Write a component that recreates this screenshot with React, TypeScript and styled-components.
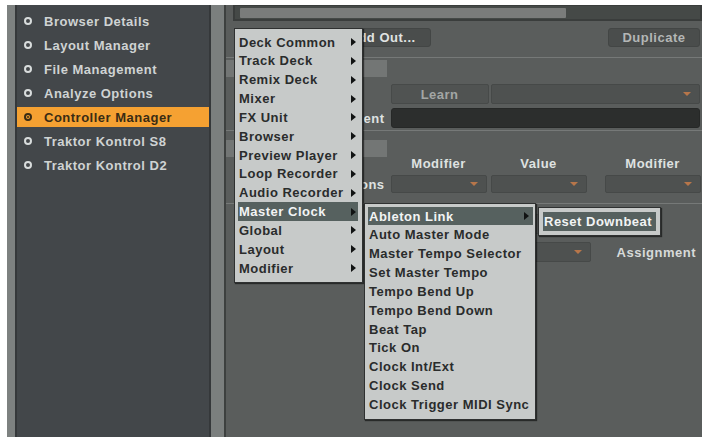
import React from "react";
import styled, { createGlobalStyle } from "styled-components";

const Global = createGlobalStyle`
  html, body { margin: 0; padding: 0; background: #ffffff; }
  body { font-family: "Liberation Sans", Arial, sans-serif; }
  * { box-sizing: border-box; }
`;

const Frame = styled.div`
  position: relative;
  width: 704px;
  height: 440px;
  padding: 5px 2px 3px 7px;
  display: flex;
  overflow: hidden;
  background: #ffffff;
`;

/* ---------- sidebar ---------- */
const Sidebar = styled.nav`
  width: 205px;
  display: flex;
  background: #7d8180;
  padding-left: 8px;
`;

const SidePanel = styled.ul`
  flex: 1;
  margin: 0;
  list-style: none;
  background: #43474a;
  border-left: 2px solid #35383a;
  border-right: 2px solid #35383a;
  padding: 6px 0 0;
  display: flex;
  flex-direction: column;
  gap: 4px;
`;

const SideItem = styled.li<{ $active?: boolean }>`
  height: 20px;
  display: flex;
  align-items: center;
  gap: 12px;
  padding-left: 7px;
  font: bold 13px/1 "Liberation Sans", Arial, sans-serif;
  letter-spacing: 0.5px;
  white-space: nowrap;
  color: ${(p) => (p.$active ? "#3a2c14" : "#cfd3d3")};
  background: ${(p) => (p.$active ? "#f5a132" : "transparent")};
`;

const Bullet = styled.span<{ $active?: boolean }>`
  width: 8px;
  height: 8px;
  flex-shrink: 0;
  border-radius: 50%;
  border: 2px solid ${(p) => (p.$active ? "#3a2c14" : "#d8dcdc")};
  display: flex;
  align-items: center;
  justify-content: center;
  &::after {
    content: "";
    width: 2px;
    height: 2px;
    border-radius: 50%;
    background: ${(p) => (p.$active ? "#3a2c14" : "transparent")};
  }
`;

const Gutter = styled.div`
  width: 15px;
  background: #7b7f7e;
  border-right: 2px solid #3d403f;
`;

/* ---------- main area ---------- */
const Main = styled.main`
  flex: 1;
  background: #5a5d5c;
  display: flex;
  flex-direction: column;
`;

const TopStrip = styled.div`
  height: 16px;
  margin-left: 7px;
  display: flex;
  align-items: center;
  background: #454947;
  border: 2px solid #3a3d3c;
  border-top-width: 1px;
`;

const ScrollFill = styled.div`
  width: 326px;
  height: 10px;
  margin-left: 5px;
  background: #7a7c7b;
  border-radius: 1px;
`;

const ButtonRow = styled.div`
  height: 36px;
  display: flex;
  align-items: flex-start;
  padding: 7px 2px 0 13px;
  gap: 5px;
`;

const Button = styled.div<{ $w: number; $color?: string; $push?: boolean }>`
  width: ${(p) => p.$w}px;
  height: 19px;
  margin-left: ${(p) => (p.$push ? "auto" : "0")};
  display: flex;
  align-items: center;
  justify-content: center;
  background: #4a4d4c;
  border: 1px solid #434645;
  border-radius: 3px;
  font: bold 13px/1 "Liberation Sans", Arial, sans-serif;
  letter-spacing: 0.5px;
  color: ${(p) => p.$color ?? "#e0e3e2"};
`;

const Rule = styled.div<{ $mt?: number }>`
  height: 1px;
  margin-top: ${(p) => p.$mt ?? 0}px;
  background: #767978;
`;

const SectionHead = styled.div<{ $mt?: number }>`
  width: 161px;
  height: 17px;
  flex-shrink: 0;
  margin-top: ${(p) => p.$mt ?? 0}px;
  background: #737675;
`;

const FieldRow = styled.div<{ $mt: number; $h: number }>`
  margin-top: ${(p) => p.$mt}px;
  height: ${(p) => p.$h}px;
  display: flex;
  align-items: stretch;
`;

const Label = styled.div`
  width: 159px;
  margin-right: 6px;
  flex-shrink: 0;
  display: flex;
  align-items: center;
  justify-content: flex-end;
  font: bold 13px/1 "Liberation Sans", Arial, sans-serif;
  letter-spacing: 0.5px;
  color: #dfe2e1;
  white-space: nowrap;
`;

const SideLabel = styled(Label)`
  width: auto;
  margin-left: 26px;
  justify-content: flex-start;
  color: #d7dad9;
`;

const Dropdown = styled.div<{ $w?: number; $ml?: number }>`
  ${(p) => (p.$w ? `width: ${p.$w}px; flex-shrink: 0;` : "flex: 1;")}
  margin-left: ${(p) => p.$ml ?? 0}px;
  margin-right: ${(p) => (p.$w ? 0 : 2)}px;
  display: flex;
  align-items: center;
  justify-content: flex-end;
  padding-right: 8px;
  background: #4e5150;
  border: 1px solid #464948;
  border-radius: 2px;
`;

const DropArrow = styled.span`
  width: 0;
  height: 0;
  border-left: 4px solid transparent;
  border-right: 4px solid transparent;
  border-top: 4px solid #b7764a;
`;

const LearnButton = styled.div`
  width: 98px;
  flex-shrink: 0;
  display: flex;
  align-items: center;
  justify-content: center;
  background: #505352;
  border: 1px solid #474a49;
  border-radius: 2px;
  font: bold 13px/1 "Liberation Sans", Arial, sans-serif;
  letter-spacing: 0.5px;
  color: #a3a6a5;
`;

const TextField = styled.div`
  flex: 1;
  margin-right: 2px;
  background: #2c2e2d;
  border: 1px solid #262827;
  border-radius: 3px;
`;

const HeadRow = styled.div<{ $mt: number }>`
  margin-top: ${(p) => p.$mt}px;
  height: 32px;
  display: flex;
`;

const ColHead = styled.div<{ $w: number; $ml: number }>`
  width: ${(p) => p.$w}px;
  margin-left: ${(p) => p.$ml}px;
  flex-shrink: 0;
  padding-top: 16px;
  text-align: center;
  font: bold 13px/15px "Liberation Sans", Arial, sans-serif;
  letter-spacing: 0.5px;
  color: #dfe2e1;
`;

/* ---------- popup menus ---------- */
const Menu = styled.ul<{
  $x: number;
  $y: number;
  $w: number;
  $h: number;
  $pt: number;
  $pl: number;
  $pr: number;
}>`
  position: absolute;
  left: ${(p) => p.$x}px;
  top: ${(p) => p.$y}px;
  width: ${(p) => p.$w}px;
  height: ${(p) => p.$h}px;
  margin: 0;
  list-style: none;
  padding: ${(p) => p.$pt}px ${(p) => p.$pr}px 0 ${(p) => p.$pl}px;
  background: #c7cac9;
  border: 1px solid #2f3131;
  box-shadow: 1px 1px 1px rgba(0, 0, 0, 0.55);
`;

const MenuItem = styled.li<{ $active?: boolean; $pr: number; $h?: number }>`
  height: ${(p) => p.$h ?? 18.85}px;
  display: flex;
  align-items: center;
  justify-content: space-between;
  padding: 0 ${(p) => p.$pr}px 0 1px;
  font: bold 13px/1 "Liberation Sans", Arial, sans-serif;
  letter-spacing: 0.5px;
  white-space: nowrap;
  color: ${(p) => (p.$active ? "#f2f4f4" : "#2a2c2c")};
  background: ${(p) => (p.$active ? "#56615f" : "transparent")};
`;

const SubArrow = styled.span`
  width: 0;
  height: 0;
  flex-shrink: 0;
  border-left: 5px solid #111313;
  border-top: 4px solid transparent;
  border-bottom: 4px solid transparent;
`;

const sideItems = [
  "Browser Details",
  "Layout Manager",
  "File Management",
  "Analyze Options",
  "Controller Manager",
  "Traktor Kontrol S8",
  "Traktor Kontrol D2",
];

const mainMenu = [
  "Deck Common",
  "Track Deck",
  "Remix Deck",
  "Mixer",
  "FX Unit",
  "Browser",
  "Preview Player",
  "Loop Recorder",
  "Audio Recorder",
  "Master Clock",
  "Global",
  "Layout",
  "Modifier",
];

const clockMenu = [
  "Ableton Link",
  "Auto Master Mode",
  "Master Tempo Selector",
  "Set Master Tempo",
  "Tempo Bend Up",
  "Tempo Bend Down",
  "Beat Tap",
  "Tick On",
  "Clock Int/Ext",
  "Clock Send",
  "Clock Trigger MIDI Sync",
];

export default function App() {
  return (
    <>
      <Global />
      <Frame>
        <Sidebar>
          <SidePanel>
            {sideItems.map((s) => (
              <SideItem key={s} $active={s === "Controller Manager"}>
                <Bullet $active={s === "Controller Manager"} />
                {s}
              </SideItem>
            ))}
          </SidePanel>
        </Sidebar>
        <Gutter />
        <Main>
          <TopStrip>
            <ScrollFill />
          </TopStrip>
          <ButtonRow>
            <Button $w={90} />
            <Button $w={97}>Add Out...</Button>
            <Button $w={92} $push $color="#b3b6b5">
              Duplicate
            </Button>
          </ButtonRow>
          <Rule />
          <SectionHead $mt={2} />
          <FieldRow $mt={7} $h={20}>
            <Label />
            <LearnButton>Learn</LearnButton>
            <Dropdown $ml={2}>
              <DropArrow />
            </Dropdown>
          </FieldRow>
          <FieldRow $mt={4} $h={20}>
            <Label>Comment</Label>
            <TextField />
          </FieldRow>
          <Rule $mt={2} />
          <HeadRow $mt={9}>
            <SectionHead />
            <ColHead $w={96} $ml={4}>Modifier</ColHead>
            <ColHead $w={96} $ml={4}>Value</ColHead>
            <ColHead $w={96} $ml={18}>Modifier</ColHead>
          </HeadRow>
          <FieldRow $mt={3} $h={18}>
            <Label>Conditions</Label>
            <Dropdown $w={96}>
              <DropArrow />
            </Dropdown>
            <Dropdown $w={96} $ml={4}>
              <DropArrow />
            </Dropdown>
            <Dropdown $w={96} $ml={18}>
              <DropArrow />
            </Dropdown>
          </FieldRow>
          <Rule $mt={10} />
          <FieldRow $mt={10} $h={20}>
            <Label />
            <Dropdown $w={200}>
              <DropArrow />
            </Dropdown>
          </FieldRow>
          <FieldRow $mt={8} $h={20}>
            <Label />
            <Dropdown $w={200}>
              <DropArrow />
            </Dropdown>
            <SideLabel>Assignment</SideLabel>
          </FieldRow>
        </Main>

        <Menu $x={234} $y={28} $w={129} $h={255} $pt={3.6} $pl={3} $pr={4}>
          {mainMenu.map((m) => (
            <MenuItem key={m} $active={m === "Master Clock"} $pr={2}>
              {m}
              <SubArrow />
            </MenuItem>
          ))}
        </Menu>

        <Menu $x={364} $y={203} $w={172} $h={217} $pt={2.6} $pl={3} $pr={2}>
          {clockMenu.map((m) => (
            <MenuItem key={m} $active={m === "Ableton Link"} $pr={4}>
              {m}
              {m === "Ableton Link" && <SubArrow />}
            </MenuItem>
          ))}
        </Menu>

        <Menu $x={538} $y={207} $w={123} $h={29} $pt={4} $pl={4} $pr={4}>
          <MenuItem $active $pr={1} $h={19}>
            Reset Downbeat
          </MenuItem>
        </Menu>
      </Frame>
    </>
  );
}
